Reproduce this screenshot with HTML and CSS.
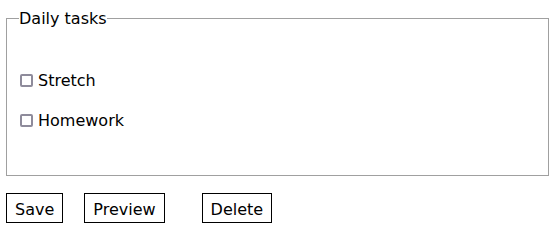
FILE: index.html
```html
<!DOCTYPE html>
<html lang="en">
<head>
<meta charset="utf-8">
<title>Daily tasks</title>
<link rel="stylesheet" href="styles.css">
</head>
<body>
<main class="page">
  <fieldset class="tasks">
    <legend class="tasks-title">Daily tasks</legend>
    <div class="task-list">
      <label class="task"><input type="checkbox" class="task-check"><span>Stretch</span></label>
      <label class="task"><input type="checkbox" class="task-check"><span>Homework</span></label>
    </div>
  </fieldset>
  <div class="actions">
    <button type="button" class="btn">Save</button>
    <button type="button" class="btn btn-preview">Preview</button>
    <button type="button" class="btn btn-delete">Delete</button>
  </div>
</main>
</body>
</html>
```

FILE: styles.css
```css
html, body {
  margin: 0;
  padding: 0;
  background: #ffffff;
}

body {
  font-family: "DejaVu Sans", sans-serif;
  font-size: 16px;
  line-height: 19px;
  color: #000000;
}

.page {
  padding: 9px 10px 0 6px;
}

.tasks {
  margin: 0;
  padding: 43px 12px 45px 12px;
  border: 1px solid #a0a0a0;
  min-width: 0;
}

.tasks-title {
  padding: 0;
  line-height: 19px;
}

.task-list {
  display: flex;
  flex-direction: column;
  gap: 21px;
}

.task {
  display: flex;
  align-items: center;
  line-height: 19px;
}

.task-check {
  -webkit-appearance: none;
  appearance: none;
  box-sizing: border-box;
  width: 13px;
  height: 13px;
  margin: 0 5px 0 1px;
  border: 2px solid #8e8b9b;
  border-radius: 2px;
  background: #ffffff;
}

.actions {
  display: flex;
  margin-top: 17px;
}

.btn {
  font-family: "DejaVu Sans", sans-serif;
  font-size: 16px;
  line-height: 18px;
  color: #000000;
  background: #ffffff;
  border: 1px solid #000000;
  border-radius: 0;
  padding: 7px 8px 3px;
  margin: 0;
}

.btn-preview {
  margin-left: 21px;
}

.btn-delete {
  margin-left: 37px;
}
```
